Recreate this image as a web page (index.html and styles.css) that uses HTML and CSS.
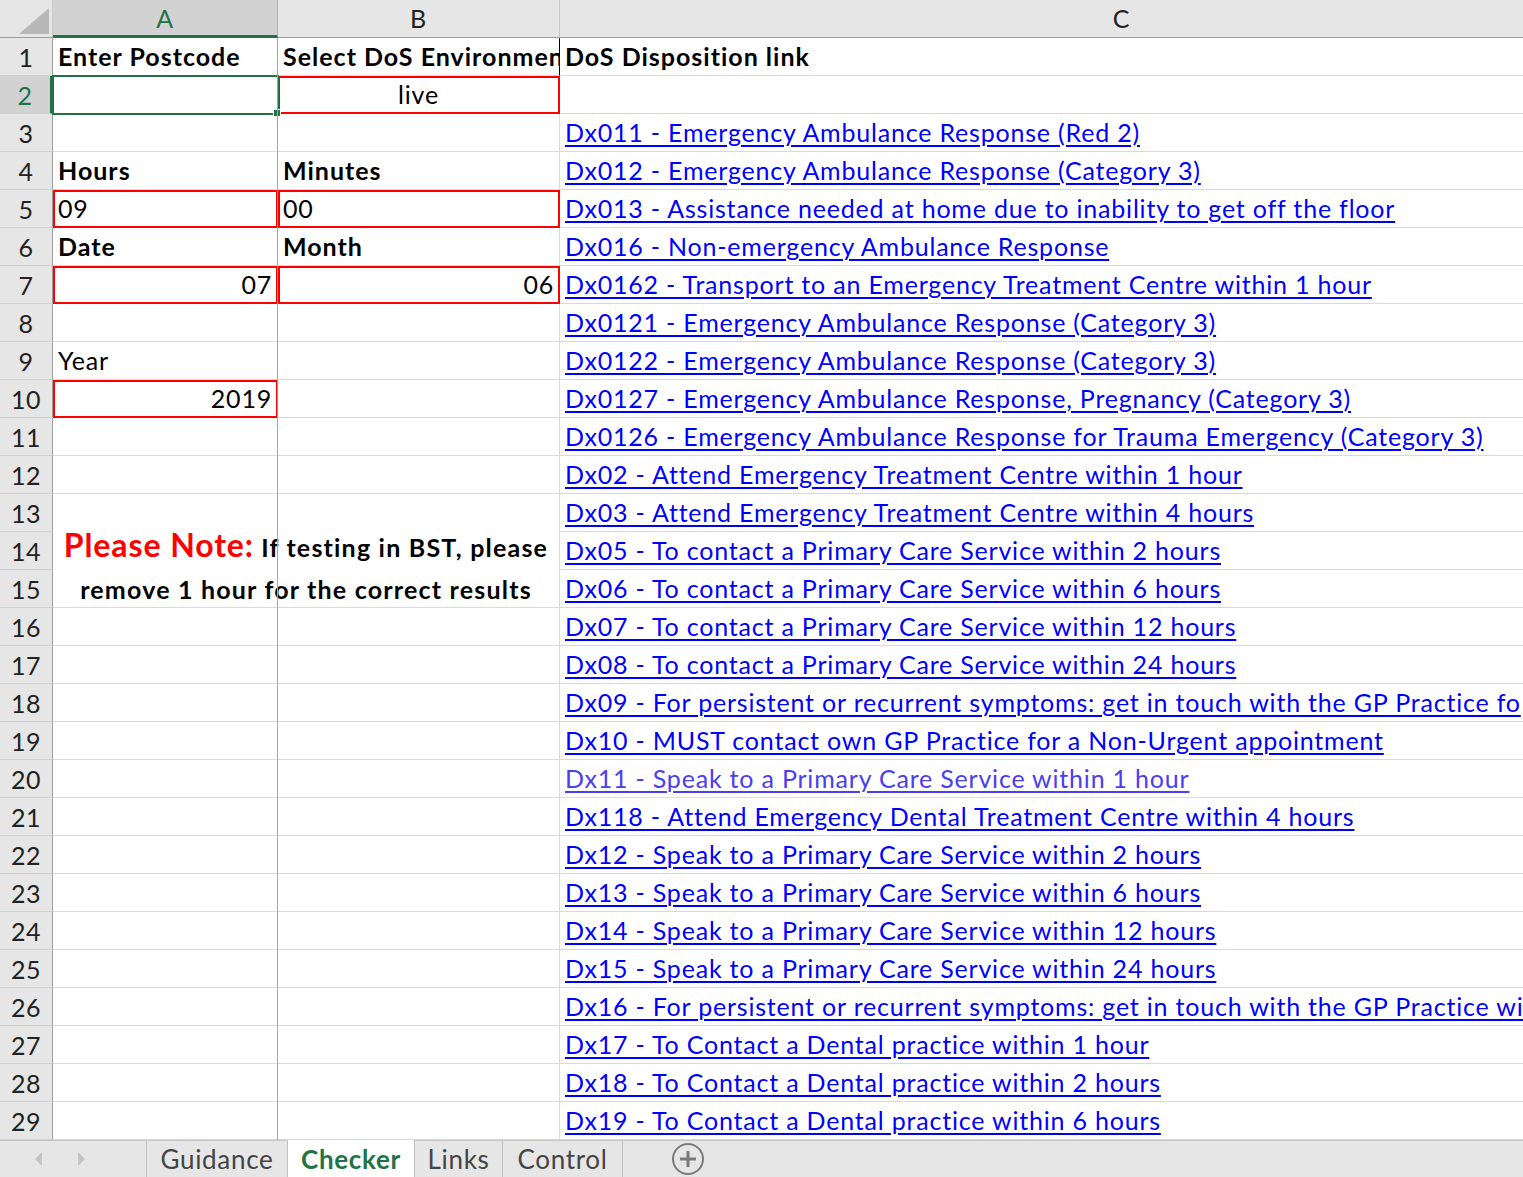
FILE: index.html
```html
<!DOCTYPE html>
<html>
<head>
<meta charset="utf-8">
<link rel="stylesheet" href="styles.css">
</head>
<body>
<div class="sheet">
  <div class="grid">
    <div class="corner"><svg width="53" height="38" viewBox="0 0 53 38"><polygon points="49,8 49,34 19,34" fill="#b8b8b8"/></svg></div>
    <div class="ch ch-sel">A</div>
    <div class="ch">B</div>
    <div class="ch">C</div>

    <div class="rh">1</div><div class="c b">Enter Postcode</div><div class="c b clip-dark">Select DoS Environment</div><div class="c b">DoS Disposition link</div>
    <div class="rh rh-sel">2</div><div class="c sel"><span class="handle"></span></div><div class="c center red">live</div><div class="c"></div>
    <div class="rh">3</div><div class="c"></div><div class="c"></div><div class="c"><a class="lnk">Dx011 - Emergency Ambulance Response (Red 2)</a></div>
    <div class="rh">4</div><div class="c b">Hours</div><div class="c b">Minutes</div><div class="c"><a class="lnk">Dx012 - Emergency Ambulance Response (Category 3)</a></div>
    <div class="rh">5</div><div class="c red">09</div><div class="c red">00</div><div class="c"><a class="lnk">Dx013 - Assistance needed at home due to inability to get off the floor</a></div>
    <div class="rh">6</div><div class="c b">Date</div><div class="c b">Month</div><div class="c"><a class="lnk">Dx016 - Non-emergency Ambulance Response</a></div>
    <div class="rh">7</div><div class="c right red">07</div><div class="c right red">06</div><div class="c"><a class="lnk">Dx0162 - Transport to an Emergency Treatment Centre within 1 hour</a></div>
    <div class="rh">8</div><div class="c"></div><div class="c"></div><div class="c"><a class="lnk">Dx0121 - Emergency Ambulance Response (Category 3)</a></div>
    <div class="rh">9</div><div class="c">Year</div><div class="c"></div><div class="c"><a class="lnk">Dx0122 - Emergency Ambulance Response (Category 3)</a></div>
    <div class="rh">10</div><div class="c right red">2019</div><div class="c"></div><div class="c"><a class="lnk">Dx0127 - Emergency Ambulance Response, Pregnancy (Category 3)</a></div>
    <div class="rh">11</div><div class="c"></div><div class="c"></div><div class="c"><a class="lnk">Dx0126 - Emergency Ambulance Response for Trauma Emergency (Category 3)</a></div>
    <div class="rh">12</div><div class="c"></div><div class="c"></div><div class="c"><a class="lnk">Dx02 - Attend Emergency Treatment Centre within 1 hour</a></div>

    <div class="merged">
      <p class="note-line"><span class="note-red">Please Note:</span> If testing in BST, please</p>
      <p class="note-line">remove 1 hour for the correct results</p>
    </div>
    <div class="rh">13</div><div class="c"><a class="lnk">Dx03 - Attend Emergency Treatment Centre within 4 hours</a></div>
    <div class="rh">14</div><div class="c"><a class="lnk">Dx05 - To contact a Primary Care Service within 2 hours</a></div>
    <div class="rh">15</div><div class="c"><a class="lnk">Dx06 - To contact a Primary Care Service within 6 hours</a></div>

    <div class="rh">16</div><div class="c"></div><div class="c"></div><div class="c"><a class="lnk">Dx07 - To contact a Primary Care Service within 12 hours</a></div>
    <div class="rh">17</div><div class="c"></div><div class="c"></div><div class="c"><a class="lnk">Dx08 - To contact a Primary Care Service within 24 hours</a></div>
    <div class="rh">18</div><div class="c"></div><div class="c"></div><div class="c"><a class="lnk">Dx09 - For persistent or recurrent symptoms: get in touch with the GP Practice fo</a></div>
    <div class="rh">19</div><div class="c"></div><div class="c"></div><div class="c"><a class="lnk">Dx10 - MUST contact own GP Practice for a Non-Urgent appointment</a></div>
    <div class="rh">20</div><div class="c"></div><div class="c"></div><div class="c"><a class="lnk visited">Dx11 - Speak to a Primary Care Service within 1 hour</a></div>
    <div class="rh">21</div><div class="c"></div><div class="c"></div><div class="c"><a class="lnk">Dx118 - Attend Emergency Dental Treatment Centre within 4 hours</a></div>
    <div class="rh">22</div><div class="c"></div><div class="c"></div><div class="c"><a class="lnk">Dx12 - Speak to a Primary Care Service within 2 hours</a></div>
    <div class="rh">23</div><div class="c"></div><div class="c"></div><div class="c"><a class="lnk">Dx13 - Speak to a Primary Care Service within 6 hours</a></div>
    <div class="rh">24</div><div class="c"></div><div class="c"></div><div class="c"><a class="lnk">Dx14 - Speak to a Primary Care Service within 12 hours</a></div>
    <div class="rh">25</div><div class="c"></div><div class="c"></div><div class="c"><a class="lnk">Dx15 - Speak to a Primary Care Service within 24 hours</a></div>
    <div class="rh">26</div><div class="c"></div><div class="c"></div><div class="c"><a class="lnk">Dx16 - For persistent or recurrent symptoms: get in touch with the GP Practice wi</a></div>
    <div class="rh">27</div><div class="c"></div><div class="c"></div><div class="c"><a class="lnk">Dx17 - To Contact a Dental practice within 1 hour</a></div>
    <div class="rh">28</div><div class="c"></div><div class="c"></div><div class="c"><a class="lnk">Dx18 - To Contact a Dental practice within 2 hours</a></div>
    <div class="rh">29</div><div class="c"></div><div class="c"></div><div class="c"><a class="lnk">Dx19 - To Contact a Dental practice within 6 hours</a></div>

    <div class="freeze"></div>
  </div>

  <div class="tabs">
    <div class="nav">
      <svg width="12" height="18" viewBox="0 0 12 18"><polygon points="9,2 2,9 9,16" fill="#c4c4c4"/></svg>
      <svg width="12" height="18" viewBox="0 0 12 18"><polygon points="3,2 10,9 3,16" fill="#c4c4c4"/></svg>
    </div>
    <div class="tab t-guidance">Guidance</div>
    <div class="tab active t-checker">Checker</div>
    <div class="tab t-links">Links</div>
    <div class="tab t-control">Control</div>
    <div class="add">
      <svg width="34" height="34" viewBox="0 0 34 34"><circle cx="17" cy="17" r="15" fill="none" stroke="#7a7a7a" stroke-width="2"/><path d="M17 9 V25 M9 17 H25" stroke="#7a7a7a" stroke-width="3"/></svg>
    </div>
  </div>
</div>
</body>
</html>
```

FILE: styles.css
```css
html, body {
  margin: 0;
  padding: 0;
  background: #ffffff;
}

.sheet {
  width: 1523px;
  height: 1177px;
  overflow: hidden;
  display: flex;
  flex-direction: column;
  font-family: Lato, "Liberation Sans", sans-serif;
  font-size: 25px;
  letter-spacing: 0.8px;
  color: #000;
}

.grid {
  position: relative;
  display: grid;
  grid-template-columns: 53px 225px 282px 1124px;
  grid-template-rows: repeat(30, 38px);
  flex: none;
}

.corner {
  background: #e6e6e6;
  border-right: 1px solid #c8c8c8;
  border-bottom: 1px solid #9e9e9e;
  box-sizing: border-box;
}

.corner svg {
  display: block;
}

.ch {
  background: #e6e6e6;
  border-right: 1px solid #c8c8c8;
  border-bottom: 1px solid #9e9e9e;
  box-sizing: border-box;
  display: flex;
  align-items: center;
  justify-content: center;
  color: #222;
  padding-bottom: 2px;
}

.ch-sel {
  background: #d2d2d2;
  color: #217346;
  border-bottom: 3px solid #217346;
  border-right-color: #b0b0b0;
  padding-bottom: 0;
}

.rh {
  background: #e6e6e6;
  border-right: 1px solid #9e9e9e;
  border-bottom: 1px solid #d0d0d0;
  box-sizing: border-box;
  display: flex;
  align-items: center;
  justify-content: center;
  color: #222;
  letter-spacing: 0.4px;
}

.rh-sel {
  background: #d2d2d2;
  color: #217346;
  border-right: 3px solid #217346;
}

.c {
  position: relative;
  box-sizing: border-box;
  border-right: 1px solid #d9d9d9;
  border-bottom: 1px solid #d9d9d9;
  display: flex;
  align-items: center;
  padding: 0 5px 2px 5px;
  white-space: nowrap;
  overflow: hidden;
}

.b {
  font-weight: bold;
  letter-spacing: 1px;
}

.center {
  justify-content: center;
}

.right {
  justify-content: flex-end;
}

.red {
  outline: 2px solid #ff0000;
  outline-offset: -2px;
  z-index: 1;
}

.clip-dark {
  border-right-color: #000;
}

.sel {
  outline: 2px solid #217346;
  outline-offset: -1px;
  overflow: visible;
  z-index: 2;
}

.handle {
  position: absolute;
  right: -4px;
  bottom: -4px;
  width: 6px;
  height: 6px;
  background: #217346;
  border: 1px solid #fff;
}

.lnk {
  color: #0000ff;
  text-decoration: underline;
  text-decoration-thickness: 2px;
  text-underline-offset: 3px;
}

.lnk.visited {
  color: #4a3ef2;
}

.merged {
  grid-column: 2 / 4;
  grid-row: 14 / 17;
  box-sizing: border-box;
  border-bottom: 1px solid #d9d9d9;
  border-right: 1px solid #d9d9d9;
  display: flex;
  flex-direction: column;
  align-items: center;
  padding-top: 29px;
  font-weight: bold;
  letter-spacing: 1.2px;
  white-space: nowrap;
}

.note-line {
  margin: 0;
  line-height: 44px;
  height: 44px;
}

.note-red {
  color: #ff0000;
  font-size: 32px;
  letter-spacing: 0.9px;
}

.freeze {
  position: absolute;
  left: 277px;
  top: 38px;
  bottom: 0;
  width: 1px;
  background: #a6a6a6;
  z-index: 3;
}

.tabs {
  flex: 1;
  display: flex;
  align-items: stretch;
  background: #e6e6e6;
  border-top: 1px solid #c6c6c6;
  color: #444;
  font-size: 26px;
  letter-spacing: 0.7px;
}

.nav {
  width: 147px;
  display: flex;
  align-items: center;
  gap: 30px;
  padding-left: 33px;
  box-sizing: border-box;
  border-right: 1px solid #c0c0c0;
}

.nav svg {
  display: block;
}

.tab {
  display: flex;
  align-items: center;
  justify-content: center;
  box-sizing: border-box;
  border-right: 1px solid #c0c0c0;
}

.t-guidance { width: 141px; }
.t-checker { width: 127px; }
.t-links { width: 88px; }
.t-control { width: 120px; }

.tab.active {
  background: #ffffff;
  color: #217346;
  font-weight: bold;
  margin-top: -1px;
}

.add {
  display: flex;
  align-items: center;
  padding-left: 48px;
}

.add svg {
  display: block;
}
```
